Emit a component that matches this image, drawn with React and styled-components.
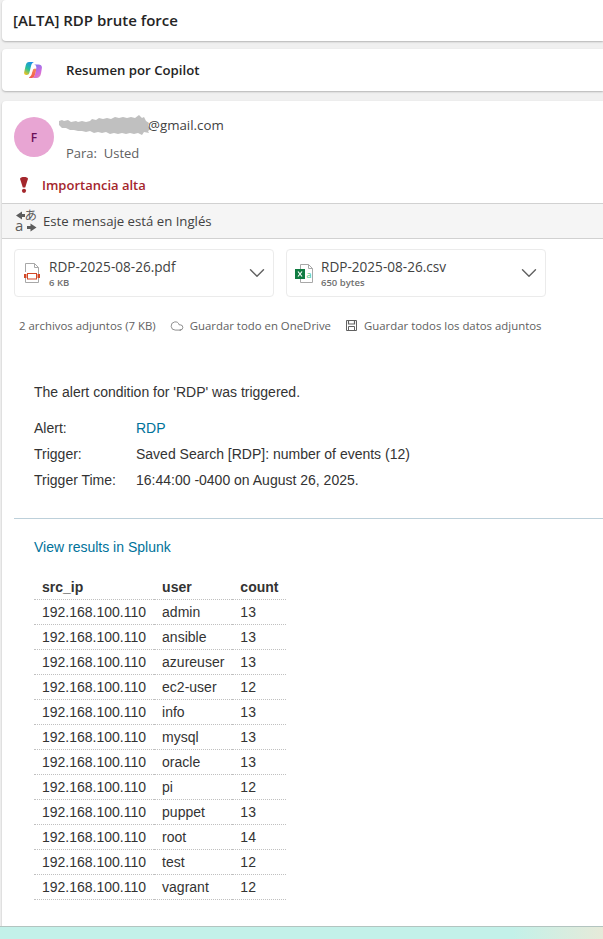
import styled, { createGlobalStyle } from "styled-components"
import { ChevronDown, Cloud } from "lucide-react"

const rows = [
  ["admin", 13],
  ["ansible", 13],
  ["azureuser", 13],
  ["ec2-user", 12],
  ["info", 13],
  ["mysql", 13],
  ["oracle", 13],
  ["pi", 12],
  ["puppet", 13],
  ["root", 14],
  ["test", 12],
  ["vagrant", 12],
]

const CopilotLogo = () => (
  <svg width="18" height="16" viewBox="0 0 18 16">
    <defs>
      <linearGradient id="cpA" x1="0.7" y1="0" x2="0.2" y2="1">
        <stop offset="0" stopColor="#1a8fe8" />
        <stop offset="0.55" stopColor="#27c29a" />
        <stop offset="1" stopColor="#f6c21c" />
      </linearGradient>
      <linearGradient id="cpB" x1="0.3" y1="0" x2="0.8" y2="1">
        <stop offset="0" stopColor="#7d78ee" />
        <stop offset="0.6" stopColor="#cf6ce0" />
        <stop offset="1" stopColor="#e884b8" />
      </linearGradient>
      <linearGradient id="cpC" x1="0.5" y1="0" x2="0.5" y2="1">
        <stop offset="0" stopColor="#f7885a" />
        <stop offset="1" stopColor="#f25a4a" />
      </linearGradient>
    </defs>
    <path d="M5 0H10C8.500 .5 7.800 1.500 7.300 3L5.300 11C5 12.300 4 13 2.800 13H2.300C.8 13 -.2 11.700 .2 10L1.800 3C2.300 1 3.400 0 5 0Z" fill="url(#cpA)" />
    <path d="M10 2.500H14.500C16.800 2.500 18.200 4 17.900 6L17 11.500C16.500 14.300 14.800 16 12.500 16H8C9.700 15.500 10.500 14.300 11 12.500L12.300 6C12.600 4.500 11.700 3 10 2.500Z" fill="url(#cpB)" />
    <path d="M10.800 6.500C11.800 6.500 12.300 7.200 12.100 8.200L11 12.500C10.500 14.300 9.700 15.500 8 16H5.500C5 16 4.800 15.500 5.300 15.200C6.700 14.500 7.300 13.500 7.800 11.800L8.700 8.300C9 7.200 9.800 6.500 10.800 6.500Z" fill="url(#cpC)" />
    <path d="M9 2.300C10.500 2 11.800 2.800 11.900 4.200L10.500 6.400C9.600 6.500 9 7.200 8.700 8.300L7.500 11.500 6.600 9Z" fill="#ffffff" opacity="0.7" />
  </svg>
)

const Redaction = () => (
  <svg width="94" height="20" viewBox="0 0 94 20">
    <path
      d="M1 6 4 5 6 6 10 5 13 7 18 6 20 7 24 6 28 7 32 6 34 4 38 5 41 3 45 4 49 3 53 4 57 2 61 3 65 2 69 3 73 2 77 3 81 0 84 3 86 2 88 6 91 8 90 11 93 14 90 16 91 18 86 17 84 20 80 18 76 19 72 18 68 19 64 18 60 19 56 18 52 19 48 17 44 18 40 17 36 18 32 16 28 17 24 16 20 16 16 15 12 15 8 13 4 13 1 10Z"
      fill="#c0c0c0"
    />
  </svg>
)

const TranslateIcon = () => (
  <TranslateSvg width="22" height="32" viewBox="0 -5 22 32" fill="none">
    <path d="M1 5.500 7 1.500V4H10V7H7V9.500Z" fill="#5c5c5c" />
    <text x="0" y="20.500" fontSize="15" fontFamily="Open Sans, sans-serif" fill="#5c5c5c">a</text>
    <text x="9.500" y="10" fontSize="12.500" fontFamily="Noto Sans CJK JP, sans-serif" fill="#5c5c5c">あ</text>
    <path d="M21.500 17.500 15.500 21.500V19H12V16H15.500V13.500Z" fill="#5c5c5c" />
  </TranslateSvg>
)

const PdfIcon = () => (
  <svg width="18" height="20" viewBox="0 0 18 20" fill="none">
    <path d="M2.500 9V.5H11.500L15.500 4.500V19.500H2.500V15" stroke="#a8a8a8" strokeWidth="1" fill="#fff" />
    <path d="M11.500 .5V4.500H15.500" stroke="#a8a8a8" strokeWidth="1" />
    <rect x="1" y="11" width="2.500" height="4" fill="#d24726" />
    <rect x="14.500" y="11" width="2.500" height="4" fill="#d24726" />
    <rect x="4.500" y="10.500" width="9" height="5.500" fill="#fff" stroke="#d24726" strokeWidth="1" />
  </svg>
)

const XlsIcon = () => (
  <svg width="19" height="19" viewBox="0 0 19 19" fill="none">
    <path d="M5.500 .5H13.500L17.500 4.500V18.500H5.500Z" fill="#fff" stroke="#a8a8a8" strokeWidth="1" />
    <path d="M13.500 .5V4.500H17.500" stroke="#a8a8a8" strokeWidth="1" />
    <rect x="0" y="5" width="10" height="10" fill="#107c41" />
    <path d="M3 7.500 7 12.500M7 7.500 3 12.500" stroke="#fff" strokeWidth="1.200" />
    <text x="11.500" y="13.500" fontSize="9" fontFamily="Open Sans, sans-serif" fill="#33c481">a</text>
  </svg>
)

const FloppyIcon = () => (
  <svg width="13" height="13" viewBox="0 0 13 13" fill="none" stroke="#616161" strokeWidth="1">
    <path d="M1.500 1.500H11.500V11.500H1.500Z" />
    <path d="M3.500 2V5H9.500V2" strokeWidth="1.200" />
    <path d="M3.500 11V7.500H9.500V11" />
  </svg>
)

const App = () => {
  return (
    <Page>
      <GlobalStyle />
      <Content>
        <SubjectCard>[ALTA] RDP brute force</SubjectCard>
        <CopilotCard>
          <CopilotSlot>
            <CopilotLogo />
          </CopilotSlot>
          Resumen por Copilot
        </CopilotCard>
        <MessageCard>
          <SenderRow>
            <Avatar>F</Avatar>
            <SenderInfo>
              <SenderAddress>
                <RedactionSlot>
                  <Redaction />
                </RedactionSlot>
                @gmail.com
              </SenderAddress>
              <Recipient>Para:&nbsp; Usted</Recipient>
            </SenderInfo>
          </SenderRow>
          <ImportanceRow>
            <ImportanceMark>
              <svg width="8" height="16" viewBox="0 0 8 16">
                <path d="M0 1.800C0 .5 2 0 4 0S8 .5 8 1.800L5.200 10.500H2.800Z" fill="#a4262c" />
                <circle cx="4" cy="13.800" r="2.100" fill="#a4262c" />
              </svg>
            </ImportanceMark>
            Importancia alta
          </ImportanceRow>
          <LanguageBar>
            <TranslateIcon />
            Este mensaje está en Inglés
          </LanguageBar>
          <Attachments>
            <AttachmentCard>
              <AttachmentIcon>
                <PdfIcon />
              </AttachmentIcon>
              <AttachmentText>
                <AttachmentName>RDP-2025-08-26.pdf</AttachmentName>
                <AttachmentSize>6 KB</AttachmentSize>
              </AttachmentText>
              <ChevronDown size={26} strokeWidth={1.3} color="#616161" />
            </AttachmentCard>
            <AttachmentCard>
              <AttachmentIcon>
                <XlsIcon />
              </AttachmentIcon>
              <AttachmentText>
                <AttachmentName>RDP-2025-08-26.csv</AttachmentName>
                <AttachmentSize>650 bytes</AttachmentSize>
              </AttachmentText>
              <ChevronDown size={26} strokeWidth={1.3} color="#616161" />
            </AttachmentCard>
          </Attachments>
          <AttachmentActions>
            <span>2 archivos adjuntos (7 KB)</span>
            <ActionItem>
              <Cloud size={14} strokeWidth={1.2} />
              Guardar todo en OneDrive
            </ActionItem>
            <ActionItem>
              <FloppyIcon />
              Guardar todos los datos adjuntos
            </ActionItem>
          </AttachmentActions>
          <MailBody>
            <AlertIntro>The alert condition for 'RDP' was triggered.</AlertIntro>
            <MetaRow>
              <MetaLabel>Alert:</MetaLabel>
              <BodyLink>RDP</BodyLink>
            </MetaRow>
            <MetaRow>
              <MetaLabel>Trigger:</MetaLabel>
              <span>Saved Search [RDP]: number of events (12)</span>
            </MetaRow>
            <MetaRow>
              <MetaLabel>Trigger Time:</MetaLabel>
              <span>16:44:00 -0400 on August 26, 2025.</span>
            </MetaRow>
            <Divider />
            <ResultsLink>View results in Splunk</ResultsLink>
            <ResultsTable>
              <thead>
                <tr>
                  <HeadCell>src_ip</HeadCell>
                  <HeadCell>user</HeadCell>
                  <HeadCell>count</HeadCell>
                </tr>
              </thead>
              <tbody>
                {rows.map(([user, count]) => (
                  <tr key={user}>
                    <Cell>192.168.100.110</Cell>
                    <Cell>{user}</Cell>
                    <Cell>{count}</Cell>
                  </tr>
                ))}
              </tbody>
            </ResultsTable>
          </MailBody>
        </MessageCard>
      </Content>
      <BottomStrip />
    </Page>
  )
}

//-----styled-components-----

const GlobalStyle = createGlobalStyle`
  html, body {
    margin: 0;
    padding: 0;
    overflow: hidden;
  }
`

const Page = styled.div`
  width: 603px;
  height: 939px;
  display: flex;
  flex-direction: column;
  background: #f0f0f0;
  font-family: "Open Sans", "Noto Sans", sans-serif;
  color: #242424;
  overflow: hidden;
`

const Content = styled.div`
  height: 926px;
  padding-left: 2px;
  display: flex;
  flex-direction: column;
  box-sizing: border-box;
  overflow: hidden;
`

const Card = styled.div`
  background: #fff;
  border-radius: 4px 0 0 4px;
  box-shadow: 0 1px 2px rgba(0, 0, 0, 0.25);
`

// 제목
const SubjectCard = styled(Card)`
  height: 39px;
  padding: 0 0 2px 11px;
  display: flex;
  align-items: center;
  font-size: 15px;
  font-weight: 600;
`

const CopilotCard = styled(Card)`
  height: 42px;
  margin-top: 8px;
  display: flex;
  align-items: center;
  font-size: 13.2px;
  font-weight: 600;
`

const CopilotSlot = styled.span`
  width: 64px;
  padding-left: 22px;
  box-sizing: border-box;
  display: flex;
`

const MessageCard = styled(Card)`
  flex: 1;
  margin-top: 10px;
  border-radius: 4px 0 0 0;
`

const SenderRow = styled.div`
  display: flex;
  padding: 16px 0 0 12px;
  gap: 12px;
`

const Avatar = styled.div`
  width: 40px;
  height: 40px;
  border-radius: 50%;
  background: #e8a5d3;
  color: #6b0f57;
  font-size: 12px;
  font-weight: 600;
  display: flex;
  align-items: center;
  justify-content: center;
`

const SenderInfo = styled.div`
  display: flex;
  flex-direction: column;
  margin-top: -6px;
`

const SenderAddress = styled.div`
  height: 28px;
  display: flex;
  align-items: center;
  font-size: 13.3px;
  color: #424242;
`

const RedactionSlot = styled.span`
  display: flex;
  margin-left: -8px;
  margin-right: -4px;
`

const Recipient = styled.div`
  font-size: 13px;
  color: #616161;
  margin-top: 5px;
`

const ImportanceRow = styled.div`
  height: 24px;
  margin-top: 11px;
  display: flex;
  align-items: center;
  font-size: 13px;
  font-weight: 600;
  color: #a4262c;
`

const ImportanceMark = styled.span`
  width: 40px;
  padding-left: 18px;
  box-sizing: border-box;
  display: flex;
`

const LanguageBar = styled.div`
  height: 34px;
  margin-top: 6px;
  padding-left: 13px;
  display: flex;
  align-items: center;
  gap: 6px;
  background: #f5f5f5;
  border-top: 1px solid #d1d1d1;
  border-bottom: 1px solid #d1d1d1;
  font-size: 13.2px;
  color: #424242;
`

const TranslateSvg = styled.svg`
  margin: -4px 0;
`

const Attachments = styled.div`
  display: flex;
  gap: 12px;
  padding: 10px 0 0 12px;
`

const AttachmentCard = styled.div`
  width: 260px;
  height: 48px;
  box-sizing: border-box;
  border: 1px solid #ebebeb;
  border-radius: 4px;
  display: flex;
  align-items: center;
  padding: 0 3px 0 8px;
`

const AttachmentIcon = styled.span`
  width: 26px;
  display: flex;
`

const AttachmentText = styled.div`
  flex: 1;
  display: flex;
  flex-direction: column;
`

const AttachmentName = styled.span`
  font-size: 13.6px;
  color: #424242;
  line-height: 19px;
`

const AttachmentSize = styled.span`
  font-size: 9.5px;
  font-weight: 600;
  color: #707070;
  line-height: 13px;
`

const AttachmentActions = styled.div`
  display: flex;
  align-items: center;
  gap: 14px;
  padding: 21px 0 0 17px;
  font-size: 11.4px;
  color: #616161;
`

const ActionItem = styled.span`
  display: flex;
  align-items: center;
  gap: 6px;
`

const MailBody = styled.div`
  padding: 51px 0 0 12px;
  font-family: "Liberation Sans", Arial, sans-serif;
  font-size: 14px;
  color: #333;
`

const AlertIntro = styled.div`
  padding-left: 20px;
  line-height: 16px;
  margin-bottom: 15px;
`

const MetaRow = styled.div`
  display: flex;
  padding-left: 20px;
  height: 26px;
  align-items: center;
`

const MetaLabel = styled.span`
  width: 102px;
`

const BodyLink = styled.span`
  color: #00729a;
`

const Divider = styled.div`
  height: 1px;
  background: #bdd0da;
  margin-top: 25px;
`

const ResultsLink = styled(BodyLink)`
  display: block;
  padding-left: 20px;
  margin-top: 20px;
  line-height: 16px;
`

const ResultsTable = styled.table`
  margin: 20px 0 0 20px;
  border-collapse: collapse;
`

const HeadCell = styled.th`
  height: 24px;
  padding: 0 8px;
  text-align: left;
  font-weight: bold;
  color: #333;
  border-bottom: 1px dotted #c0c0c0;
`

const Cell = styled.td`
  height: 24px;
  padding: 0 8px;
  border-bottom: 1px dotted #c0c0c0;
`

const BottomStrip = styled.div`
  height: 13px;
  border-top: 1px solid #b3c4c0;
  box-sizing: border-box;
  background: linear-gradient(90deg, #c3f1e9 0%, #c3f1e9 85%, #e6ead9 100%);
`

export default App
